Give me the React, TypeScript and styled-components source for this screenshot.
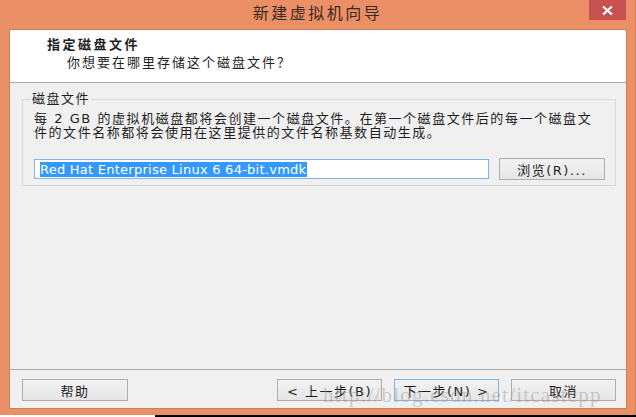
import React from "react";
import styled, { createGlobalStyle } from "styled-components";

const GlobalStyle = createGlobalStyle`
  html, body {
    margin: 0;
    padding: 0;
    background: #ffffff;
  }
  body {
    font-family: "Noto Sans CJK SC", "DejaVu Sans", sans-serif;
    color: #1e1e1e;
  }
`;

const cjk = `"DejaVu Sans", "Noto Sans CJK SC", sans-serif`;

const Page = styled.div`
  width: 636px;
  height: 417px;
  display: flex;
  flex-direction: column;
  overflow: hidden;
`;

const Window = styled.div`
  position: relative;
  height: 415px;
  background: #eb8f66;
  border-right: 1px solid #d57f5a;
  box-sizing: border-box;
  display: flex;
  flex-direction: column;
`;

const TitleBar = styled.div`
  height: 30px;
  flex: none;
  display: grid;
  grid-template-columns: 1fr auto 1fr;
  align-items: start;
`;

const Title = styled.div`
  grid-column: 2;
  font-family: ${cjk};
  font-size: 16px;
  letter-spacing: 2.5px;
  line-height: 28px;
  color: #3a2a22;
`;

const CloseButton = styled.div`
  grid-column: 3;
  justify-self: end;
  margin-right: 9px;
  width: 37px;
  height: 20px;
  background: #c75050;
  display: flex;
  align-items: center;
  justify-content: center;
`;

const Client = styled.div`
  flex: 1;
  margin: 0 9px 7px 10px;
  background: #f0f0f0;
  display: flex;
  flex-direction: column;
  box-shadow: 0 0 0 1px rgba(120, 70, 40, 0.25);
`;

const Header = styled.div`
  height: 53px;
  flex: none;
  background: #ffffff;
  border-bottom: 1px solid #a9a9a9;
  box-sizing: border-box;
  padding: 6px 0 0 37px;
  display: flex;
  flex-direction: column;
`;

const HeaderTitle = styled.div`
  font-family: ${cjk};
  font-weight: bold;
  font-size: 13px;
  letter-spacing: 2.5px;
  line-height: 17px;
`;

const HeaderSub = styled.div`
  font-family: "Noto Sans CJK SC", sans-serif;
  font-size: 13px;
  letter-spacing: 2px;
  line-height: 17px;
  padding-left: 20px;
`;

const Body = styled.div`
  flex: 1;
  padding: 7px 11px 0 12px;
`;

const GroupBox = styled.fieldset`
  margin: 0;
  border: 1px solid #d8d8d8;
  padding: 4px 10px 5px 11px;
`;

const Legend = styled.legend`
  font-family: ${cjk};
  font-size: 13px;
  letter-spacing: 1.5px;
  line-height: 18px;
  padding: 0 1px;
  margin-left: -3px;
`;

const Description = styled.div`
  font-family: ${cjk};
  font-size: 13px;
  letter-spacing: 1.55px;
  line-height: 14px;
`;

const FileRow = styled.div`
  margin-top: 18px;
  display: flex;
  align-items: center;
  gap: 10px;
`;

const TextBox = styled.div`
  width: 455px;
  height: 20px;
  box-sizing: border-box;
  border: 1px solid #7eb4ea;
  background: #ffffff;
  display: flex;
  align-items: center;
  padding-left: 5px;
`;

const Selected = styled.span`
  background: #3399ff;
  color: #ffffff;
  font-family: "DejaVu Sans", sans-serif;
  font-size: 13px;
  letter-spacing: 0.25px;
  line-height: 15px;
  padding-right: 1px;
`;

const Button = styled.div<{ $default?: boolean; $w?: number }>`
  width: ${(p) => p.$w ?? 106}px;
  height: 22px;
  box-sizing: border-box;
  border: 1px solid ${(p) => (p.$default ? "#7fb4ea" : "#adadad")};
  background: linear-gradient(#f2f2f2, #e6e6e6);
  display: flex;
  align-items: center;
  justify-content: center;
  font-family: ${cjk};
  font-size: 13px;
  letter-spacing: 1.5px;
  color: #1e1e1e;
  flex: none;
`;

const Footer = styled.div`
  height: 39px;
  flex: none;
  border-top: 1px solid #a9a9a9;
  box-sizing: border-box;
  padding: 9px 10px 0 12px;
  display: flex;
  align-items: flex-start;
`;

const Spacer = styled.div`
  flex: 1;
`;

const NavGroup = styled.div`
  display: flex;
  gap: 12px;
`;

const Watermark = styled.div`
  position: absolute;
  left: 323px;
  top: 383px;
  font-family: "Liberation Serif", serif;
  font-size: 21px;
  letter-spacing: 1.2px;
  color: rgba(150, 150, 150, 0.45);
  pointer-events: none;
  white-space: nowrap;
`;

const BottomStrip = styled.div`
  height: 2px;
  display: flex;
`;

const BlackEdge = styled.div`
  margin-left: 155px;
  flex: 1;
  background: #000000;
`;

export default function App() {
  return (
    <>
      <GlobalStyle />
      <Page>
        <Window>
          <TitleBar>
            <Title>新建虚拟机向导</Title>
            <CloseButton>
              <svg width="11" height="9" viewBox="0 0 11 9">
                <path d="M1 0.5 L10 8.5 M10 0.5 L1 8.5" stroke="#ffffff" strokeWidth="2.2" />
              </svg>
            </CloseButton>
          </TitleBar>
          <Client>
            <Header>
              <HeaderTitle>指定磁盘文件</HeaderTitle>
              <HeaderSub>你想要在哪里存储这个磁盘文件？</HeaderSub>
            </Header>
            <Body>
              <GroupBox>
                <Legend>磁盘文件</Legend>
                <Description>
                  每 2 GB 的虚拟机磁盘都将会创建一个磁盘文件。在第一个磁盘文件后的每一个磁盘文
                  <br />
                  件的文件名称都将会使用在这里提供的文件名称基数自动生成。
                </Description>
                <FileRow>
                  <TextBox>
                    <Selected>Red Hat Enterprise Linux 6 64-bit.vmdk</Selected>
                  </TextBox>
                  <Button>浏览(R)...</Button>
                </FileRow>
              </GroupBox>
            </Body>
            <Footer>
              <Button>帮助</Button>
              <Spacer />
              <NavGroup>
                <Button $w={105}>&lt; 上一步(B)</Button>
                <Button $w={105} $default>
                  下一步(N) &gt;
                </Button>
                <Button $w={105}>取消</Button>
              </NavGroup>
            </Footer>
          </Client>
          <Watermark>http://blog.csdn.net/itcastcpp</Watermark>
        </Window>
        <BottomStrip>
          <BlackEdge />
        </BottomStrip>
      </Page>
    </>
  );
}
